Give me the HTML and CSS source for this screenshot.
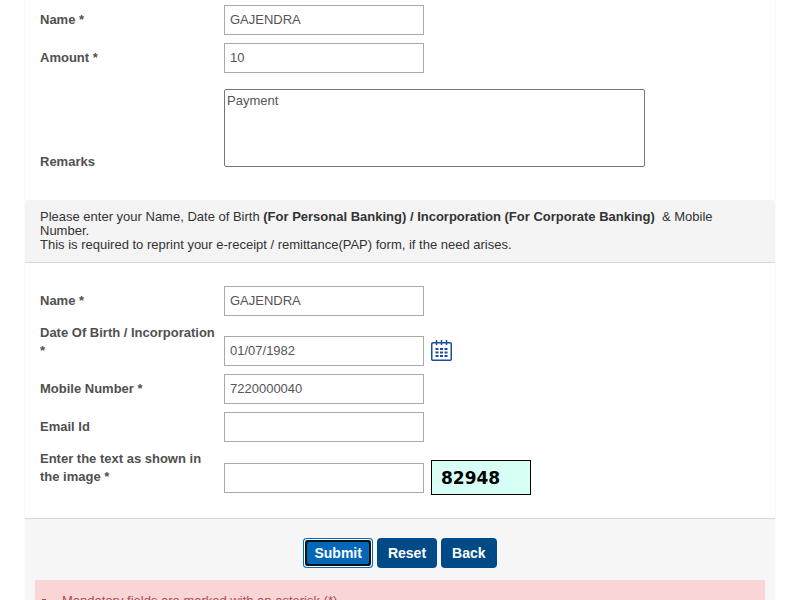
FILE: index.html
```html
<!DOCTYPE html>
<html lang="en">
<head>
<meta charset="utf-8">
<meta name="viewport" content="width=device-width, initial-scale=1">
<title>Payment Details</title>
<link rel="stylesheet" href="styles.css">
</head>
<body>
<form class="panel">
  <section class="fields fields-payment">
    <div class="row">
      <label class="label" for="payer">Name *</label>
      <div class="control"><input class="text" id="payer" type="text" value="GAJENDRA"></div>
    </div>
    <div class="row">
      <label class="label" for="amount">Amount *</label>
      <div class="control"><input class="text" id="amount" type="text" value="10"></div>
    </div>
    <div class="row row-remarks">
      <label class="label" for="remarks">Remarks</label>
      <div class="control"><textarea class="remarks" id="remarks">Payment</textarea></div>
    </div>
  </section>

  <p class="notice">Please enter your Name, Date of Birth <strong>(For Personal Banking) / Incorporation (For Corporate Banking)</strong>&nbsp; &amp; Mobile Number.<br>This is required to reprint your e-receipt / remittance(PAP) form, if the need arises.</p>

  <section class="fields fields-person">
    <div class="row">
      <label class="label" for="name">Name *</label>
      <div class="control"><input class="text" id="name" type="text" value="GAJENDRA"></div>
    </div>
    <div class="row">
      <label class="label" for="dob">Date Of Birth / Incorporation *</label>
      <div class="control">
        <input class="text" id="dob" type="text" value="01/07/1982">
        <button class="calendar" type="button" aria-label="Choose date">
          <svg width="22" height="22" viewBox="0 0 22 22" fill="none" stroke="#1c4c96">
            <rect x="0.75" y="2.75" width="19.5" height="17.5" rx="1" stroke-width="1.5"/>
            <path d="M5.5 0v5M10.5 0v5M15.5 0v5" stroke-width="1.5"/>
            <path d="M4.5 9h12M4.5 12.5h12M4.5 16h12" stroke-width="2" stroke-dasharray="3 1.5"/>
          </svg>
        </button>
      </div>
    </div>
    <div class="row">
      <label class="label" for="mobile">Mobile Number *</label>
      <div class="control"><input class="text" id="mobile" type="text" value="7220000040"></div>
    </div>
    <div class="row">
      <label class="label" for="email">Email Id</label>
      <div class="control"><input class="text" id="email" type="text"></div>
    </div>
    <div class="row row-captcha">
      <label class="label" for="captcha">Enter the text as shown in the image *</label>
      <div class="control">
        <input class="text" id="captcha" type="text">
        <span class="captcha">82948</span>
      </div>
    </div>
  </section>

  <footer class="footer">
    <div class="actions">
      <button class="button button-focus" type="submit">Submit</button>
      <button class="button" type="reset">Reset</button>
      <button class="button" type="button">Back</button>
    </div>
    <ul class="hints">
      <li>Mandatory fields are marked with an asterisk (*)</li>
    </ul>
  </footer>
</form>
</body>
</html>
```

FILE: styles.css
```css
* {
  box-sizing: border-box;
}

body {
  margin: 0;
  background: #fff;
  color: #505050;
  font: 13px/18px "Liberation Sans", Arial, sans-serif;
}

.panel {
  margin: 0 24px;
  border: solid #fafafa;
  border-width: 0 1px;
}

.fields {
  display: flex;
  flex-direction: column;
  gap: 8px;
  padding: 23px 15px;
}

.fields-payment {
  padding-top: 5px;
  padding-bottom: 29px;
}

.row {
  display: flex;
  align-items: flex-end;
}

.label {
  flex: none;
  width: 184px;
  padding: 0 8px 6px 0;
  font-weight: bold;
}

.control {
  display: flex;
  flex: 1;
  align-items: center;
  gap: 7px;
}

.text {
  width: 200px;
  height: 30px;
  padding: 0 5px 2px;
  border: 1px solid #a9a9a9;
  background: #fff;
  color: #555;
  font: inherit;
}

.row-remarks {
  padding-top: 8px;
}

.row-remarks .label {
  padding-bottom: 0;
}

.row-remarks .control {
  padding-bottom: 4px;
}

.remarks {
  width: 421px;
  height: 78px;
  padding: 2px;
  border: 1px solid #767676;
  border-radius: 2px;
  background: #fff;
  color: #555;
  font: inherit;
  resize: none;
}

.calendar {
  padding: 0;
  border: 0;
  background: none;
  cursor: pointer;
}

.calendar svg {
  display: block;
}

.row-captcha .label {
  padding-bottom: 9px;
}

.captcha {
  width: 100px;
  height: 35px;
  padding-left: 9px;
  border: 1px solid #000;
  background: #d8fff6;
  color: #000;
  font: bold 17px/35px "DejaVu Sans", sans-serif;
}

.notice {
  margin: 0;
  padding: 10px 15px;
  border-bottom: 1px solid #d8d8d8;
  border-radius: 3px 3px 0 0;
  background: #f4f4f4;
  color: #333;
  line-height: 14px;
}

.footer {
  padding: 19px 10px 0;
  border-top: 1px solid #d8d8d8;
  background: #f6f6f6;
}

.actions {
  display: flex;
  justify-content: center;
  gap: 4px;
}

.button {
  position: relative;
  height: 30px;
  padding: 0 11px;
  border: 0;
  border-radius: 4px;
  background: #004b87;
  color: #fff;
  font: bold 14px/20px "Liberation Sans", Arial, sans-serif;
}

.button-focus {
  background: #0067b9;
  box-shadow: inset 0 0 0 1px #0067b9, inset 0 0 0 2px #fff;
}

.button-focus::before {
  content: "";
  position: absolute;
  inset: 2px;
  border: 2px solid #101010;
  border-radius: 4px;
}

.hints {
  margin: 12px 0 0;
  padding: 12px 7px;
  background: #f9d5d5;
  color: #a94f52;
  list-style: none;
}

.hints li {
  display: flex;
  align-items: center;
  gap: 16px;
}

.hints li::before {
  content: "";
  width: 4px;
  height: 4px;
  background: currentColor;
}
```
